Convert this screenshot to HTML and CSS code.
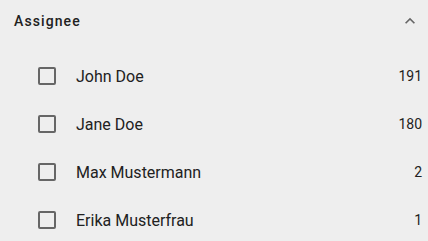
FILE: index.html
```html
<!DOCTYPE html>
<html lang="en">
  <head>
    <meta charset="UTF-8" />
    <title>Assignee filter</title>
    <link rel="stylesheet" href="styles.css">
  </head>
  <body>
    <div class="filter">
      <div class="filter-head">
        <span class="filter-title">Assignee</span>
        <svg class="chevron" viewBox="0 0 24 24" width="20" height="20">
          <path d="M12 8l-6 6 1.41 1.41L12 10.83l4.59 4.58L18 14z" />
        </svg>
      </div>
      <ul class="options">
        <li class="option">
          <span class="box"></span>
          <span class="label">John Doe</span>
          <span class="count">191</span>
        </li>
        <li class="option">
          <span class="box"></span>
          <span class="label">Jane Doe</span>
          <span class="count">180</span>
        </li>
        <li class="option">
          <span class="box"></span>
          <span class="label">Max Mustermann</span>
          <span class="count">2</span>
        </li>
        <li class="option">
          <span class="box"></span>
          <span class="label">Erika Musterfrau</span>
          <span class="count">1</span>
        </li>
      </ul>
    </div>
  </body>
</html>
```

FILE: styles.css
```css
html,
body {
  margin: 0;
  background: #eeeeee;
  font-family: Roboto, "Liberation Sans", sans-serif;
  color: #212121;
}

.filter {
  width: 428px;
}

.filter-head {
  display: flex;
  align-items: center;
  justify-content: space-between;
  height: 42px;
  padding: 0 8px 0 14px;
}

.filter-title {
  font-size: 14px;
  font-weight: 500;
  letter-spacing: 1.1px;
}

.chevron {
  fill: #666666;
}

.options {
  list-style: none;
  margin: 0;
  padding: 10px 0 0 0;
}

.option {
  display: flex;
  align-items: center;
  height: 48px;
  padding: 0 6px 0 38px;
}

.box {
  width: 14px;
  height: 14px;
  border: 2px solid #666666;
  border-radius: 2px;
  flex: none;
}

.label {
  flex: 1;
  margin-left: 20px;
  font-size: 16px;
}

.count {
  font-size: 14px;
}
```
